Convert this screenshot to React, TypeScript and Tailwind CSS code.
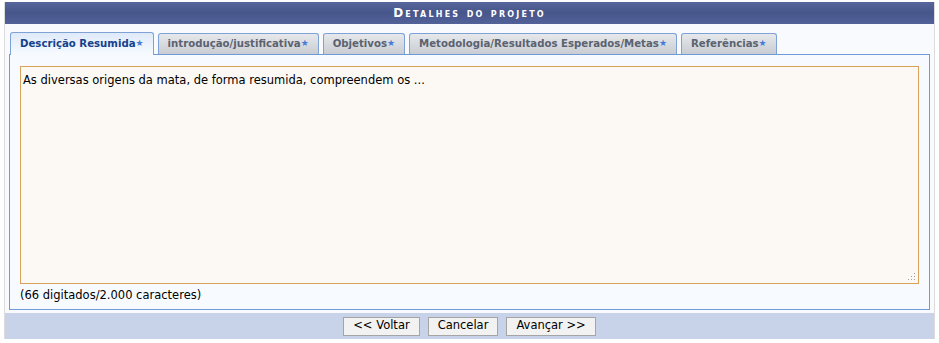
import React from "react";

const TABS = [
  { label: "Descrição Resumida", active: true },
  { label: "introdução/justificativa", active: false },
  { label: "Objetivos", active: false },
  { label: "Metodologia/Resultados Esperados/Metas", active: false },
  { label: "Referências", active: false },
];

const TEXT = "As diversas origens da mata, de forma resumida, compreendem os ...";

function Star() {
  return <span className="text-[9px] text-[#4a7bd6] align-[1px] font-['DejaVu_Sans',sans-serif]">★</span>;
}

export default function App() {
  return (
    <div className="w-[939px] h-[343px] bg-white pt-[2px] font-['DejaVu_Sans',Verdana,sans-serif]">
      <div className="mx-[4px] border-x border-[#dcdcdc] bg-[#f8fafd]">
        {/* header */}
        <div className="h-[22px] bg-gradient-to-b from-[#56659a] via-[#47568a] to-[#52629a] flex items-center justify-center">
          <span className="text-white text-[12px] font-bold tracking-[2.2px] [font-variant:small-caps]">
            Detalhes do projeto
          </span>
        </div>

        {/* tabs */}
        <div className="px-[4px] pt-[8px]">
          <div className="flex items-end gap-[4px] pl-[1px] h-[22px] relative z-10 font-['DejaVu_Sans_Condensed','DejaVu_Sans',sans-serif]">
            {TABS.map((t) => (
              <div
                key={t.label}
                className={
                  t.active
                    ? "h-[23px] -mb-[1px] px-[9px] flex items-center border border-b-0 border-[#7ea2d6] rounded-t-[3px] bg-gradient-to-b from-[#dfeaf9] to-[#f7fbff] text-[#15428b] text-[11.3px] font-bold"
                    : "h-[21px] px-[9px] flex items-center border border-b-0 border-[#7ea2d6] rounded-t-[3px] bg-gradient-to-b from-[#e6e8eb] to-[#c9cdd3] text-[#5b6270] text-[11.3px] font-bold"
                }
              >
                {t.label}
                <Star />
              </div>
            ))}
          </div>

          {/* panel */}
          <div className="border border-[#6e9ad6] bg-[#f7fbff] h-[256px] px-[10px] pt-[11px]">
            <div className="h-[218px] border border-[#d9a25a] bg-[#fcf9f4] relative px-[2px] py-[5px] text-[11.5px] text-black">
              {TEXT}
              <svg className="absolute right-[2px] bottom-[2px]" width="8" height="8" viewBox="0 0 8 8">
                <rect x="6" y="0" width="1" height="1" fill="#a0a0a0" />
                <rect x="3" y="3" width="1" height="1" fill="#a0a0a0" />
                <rect x="6" y="3" width="1" height="1" fill="#a0a0a0" />
                <rect x="0" y="6" width="1" height="1" fill="#a0a0a0" />
                <rect x="3" y="6" width="1" height="1" fill="#a0a0a0" />
                <rect x="6" y="6" width="1" height="1" fill="#a0a0a0" />
              </svg>
            </div>
            <div className="mt-[3px] text-[11.5px] text-black">(66 digitados/2.000 caracteres)</div>
          </div>
        </div>

        {/* footer */}
        <div className="mt-[3px] h-[26px] bg-[#c8d3ea] flex items-center justify-center gap-[8px]">
          {["<< Voltar", "Cancelar", "Avançar >>"].map((b) => (
            <button
              key={b}
              className="h-[19px] px-[9px] border border-[#a5a5a5] bg-[#f2f2f2] text-[11.5px] text-black leading-none"
            >
              {b}
            </button>
          ))}
        </div>
      </div>
    </div>
  );
}
